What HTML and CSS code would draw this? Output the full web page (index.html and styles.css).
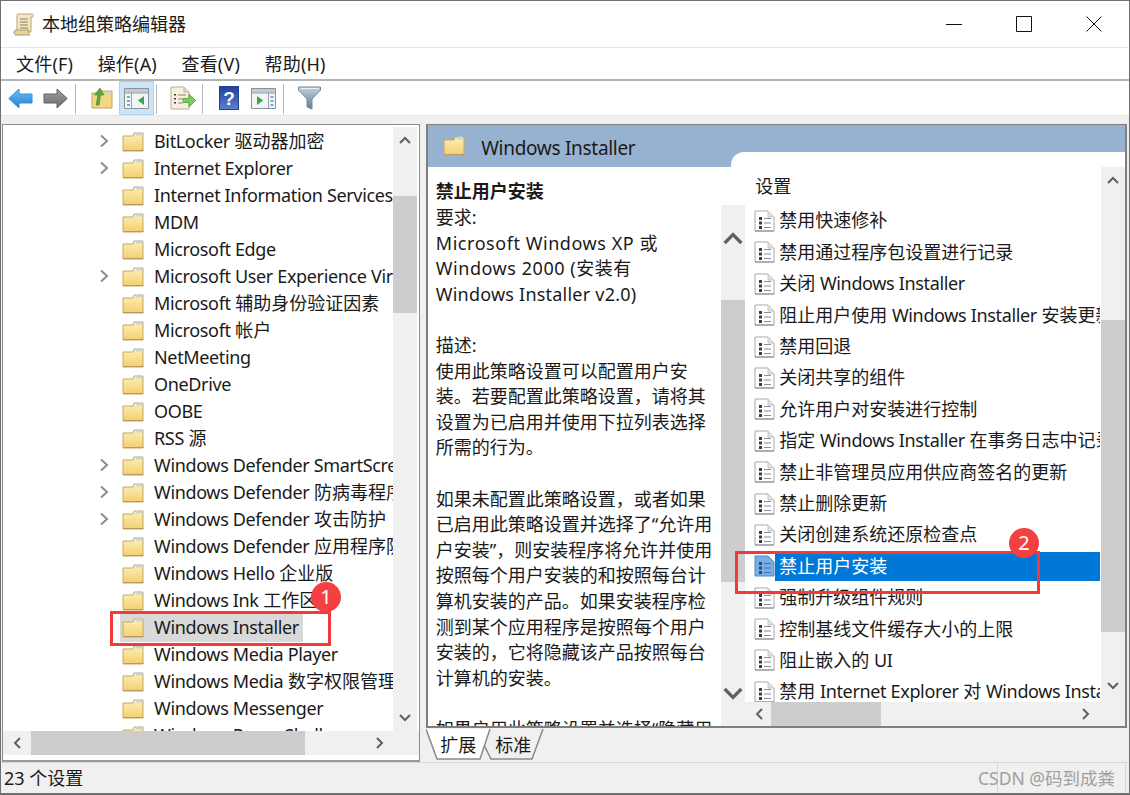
FILE: index.html
```html
<!DOCTYPE html>
<html lang="zh-CN">
<head>
<meta charset="utf-8">
<title>本地组策略编辑器</title>
<link rel="stylesheet" href="styles.css">
</head>
<body>
<svg class="defs" aria-hidden="true">
  <defs>
    <linearGradient id="gFolder" x1="0" y1="0" x2="0" y2="1"><stop offset="0" stop-color="#fdf0b8"/><stop offset="1" stop-color="#f3cf6f"/></linearGradient>
    <linearGradient id="gBack" x1="0" y1="0" x2="0" y2="1"><stop offset="0" stop-color="#6cc0f5"/><stop offset="1" stop-color="#1f7fd6"/></linearGradient>
    <linearGradient id="gFwd" x1="0" y1="0" x2="0" y2="1"><stop offset="0" stop-color="#a2a2a2"/><stop offset="1" stop-color="#6a6a6a"/></linearGradient>
    <linearGradient id="gHelp" x1="0" y1="0" x2="0" y2="1"><stop offset="0" stop-color="#1f3f9c"/><stop offset="1" stop-color="#5a7fd0"/></linearGradient>
    <linearGradient id="gFunnel" x1="0" y1="0" x2="0" y2="1"><stop offset="0" stop-color="#c4d2dc"/><stop offset="1" stop-color="#5f7f92"/></linearGradient>
    <symbol id="folder" viewBox="0 0 22 21">
      <path d="M1 5h10l1-3h9v18H1z" fill="url(#gFolder)" stroke="#c9a765"/>
      <path d="M14 1.500h6v3h-6z" fill="#bcd6e6"/>
      <path d="M1.500 19.500h20" stroke="#b89a5c"/>
    </symbol>
    <symbol id="doc" viewBox="0 0 21 22">
      <path d="M1 1h13l6 6v14H1z" fill="#fff" stroke="#a8a8a8"/>
      <path d="M14 1v6h6" fill="#e4e4e4" stroke="#c4c4c4"/>
      <path d="M1 21h19" stroke="#8a8a8a"/>
      <path d="M5 7h3v3H5zM5 11.500h3v3H5zM5 16h3v3H5z" fill="#3c3c4a"/>
      <path d="M10 8.500h7M10 13h7M10 17.500h7" stroke="#8a8aa0"/>
    </symbol>
    <symbol id="docSel" viewBox="0 0 21 22">
      <path d="M1 1h13l6 6v14H1z" fill="#79aee0" stroke="#4f8cc6"/>
      <path d="M5 7h3v3H5zM5 11.500h3v3H5zM5 16h3v3H5z" fill="#1e4f8c"/>
      <path d="M10 8.500h7M10 13h7M10 17.500h7" stroke="#3f78b4"/>
    </symbol>
    <symbol id="chevR" viewBox="0 0 10 14"><path d="M2 1.500 8 7l-6 5.500" fill="none" stroke="#8c8c8c" stroke-width="2"/></symbol>
    <symbol id="up" viewBox="0 0 12 8"><path d="M1 7 6 2l5 5" fill="none" stroke="#606060" stroke-width="2"/></symbol>
    <symbol id="down" viewBox="0 0 12 8"><path d="M1 1l5 5 5-5" fill="none" stroke="#606060" stroke-width="2"/></symbol>
    <symbol id="left" viewBox="0 0 8 12"><path d="M7 1 2 6l5 5" fill="none" stroke="#606060" stroke-width="2"/></symbol>
    <symbol id="right" viewBox="0 0 8 12"><path d="M1 1l5 5-5 5" fill="none" stroke="#606060" stroke-width="2"/></symbol>
  </defs>
</svg>

<div class="window">
  <header class="titlebar">
    <svg class="app-icon" viewBox="0 0 22 23">
      <path d="M5 1h14c2 0 2 3 0 3h-1v15H4V4C4 2 4 1 5 1z" fill="#f3e8c4" stroke="#b8a478"/>
      <path d="M7 6h8M7 9h8M7 12h8M7 15h8" stroke="#8a8060"/>
      <path d="M1 19c0-2 2-2 3-2h12c-1 1-1 4 1 5H3c-1 0-2-1-2-3z" fill="#e6d49e" stroke="#b09c6c"/>
    </svg>
    <span class="title-text">本地组策略编辑器</span>
    <div class="win-controls">
      <span class="win-btn"><svg viewBox="0 0 16 16"><path d="M0 8.500h16" stroke="#111"/></svg></span>
      <span class="win-btn"><svg viewBox="0 0 16 16"><path d="M.5.500h15v15H.5z" fill="none" stroke="#111"/></svg></span>
      <span class="win-btn"><svg viewBox="0 0 16 16"><path d="M.5.500l15 15M15.500.500l-15 15" stroke="#111"/></svg></span>
    </div>
  </header>

  <nav class="menubar">
    <span>文件(F)</span><span>操作(A)</span><span>查看(V)</span><span>帮助(H)</span>
  </nav>

  <div class="toolbar">
    <span class="tb"><svg class="ic-arrow" viewBox="0 0 25 21"><path d="M.8 10.500 11 1v5h13v9H11v5z" fill="url(#gBack)" stroke="#3a8cd0"/></svg></span>
    <span class="tb"><svg class="ic-arrow" viewBox="0 0 25 21"><path d="M24.200 10.500 14 1v5H1v9h13v5z" fill="url(#gFwd)" stroke="#606060"/></svg></span>
    <i class="sep"></i>
    <span class="tb"><svg class="ic-up" viewBox="0 0 22 22"><path d="M1 6h8l1-2h11v17H1z" fill="#f2d684" stroke="#c4a25c"/><path d="M14 4.500h6v2h-6z" fill="#bcd6e6"/><path d="M5 18 7 8H3.500L9 1l4 7H9.500L8 18z" fill="#58a83c" stroke="#3c8a2c" stroke-width=".6"/></svg></span>
    <span class="tb tb-active"><svg class="ic-pane" viewBox="0 0 25 21"><path d="M.5.500h24v20H.5z" fill="#f2f4f6" stroke="#8a929a"/><path d="M1 1h23v4H1z" fill="#c4cad0"/><path d="M7.500 5v15M1 5h23" stroke="#9aa2aa"/><path d="M3 8h3v2H3zM3 12h3v2H3zM3 16h3v2H3z" fill="#7fa6cc"/><path d="M20 8v9l-6-4.500z" fill="#3aa83a"/></svg></span>
    <i class="sep"></i>
    <span class="tb"><svg class="ic-export" viewBox="0 0 26 24"><path d="M1 1h13l5 5v17H1z" fill="#f6f0dc" stroke="#b8b09a"/><path d="M14 1v5h5" fill="#e4dcc4" stroke="#b8b09a"/><path d="M4 8h2v1.500H4zM4 12h2v1.500H4zM4 16h2v1.500H4z" fill="#3c3c3c"/><path d="M8 9h8M8 13h5M8 17h5" stroke="#8a8a7a"/><path d="M13 12.500h6V8l6.500 6.500-6.500 6.500v-4.500h-6z" fill="#7ccc5c" stroke="#4ea23c" stroke-width=".8"/></svg></span>
    <i class="sep"></i>
    <span class="tb"><svg class="ic-help" viewBox="0 0 20 24"><rect x=".5" y=".5" width="19" height="23" fill="url(#gHelp)" stroke="#25408c"/><text x="10" y="19" class="help-q">?</text></svg></span>
    <span class="tb"><svg class="ic-pane" viewBox="0 0 25 21"><path d="M.5.500h24v20H.5z" fill="#f2f4f6" stroke="#8a929a"/><path d="M1 1h23v4H1z" fill="#c4cad0"/><path d="M17.500 5v15M1 5h23" stroke="#9aa2aa"/><path d="M19.500 8h3v2h-3zM19.500 12h3v2h-3zM19.500 16h3v2h-3z" fill="#7fa6cc"/><path d="M6 8v9l6-4.500z" fill="#3aa83a"/></svg></span>
    <i class="sep"></i>
    <span class="tb"><svg class="ic-filter" viewBox="0 0 23 24"><path d="M.5 1h22v3L14 13v10l-5-2v-8L.5 4z" fill="url(#gFunnel)" stroke="#708a9a"/><path d="M3 2.500h17" stroke="#eef3f6"/></svg></span>
  </div>
  <div class="toolstrip"></div>

  <main class="panes">
    <section class="lpane">
      <div class="lpane-top">
        <ul class="tree">
          <li><svg class="tw"><use href="#chevR"/></svg><svg class="fd"><use href="#folder"/></svg><span><em>BitLocker</em> 驱动器加密</span></li>
          <li><svg class="tw"><use href="#chevR"/></svg><svg class="fd"><use href="#folder"/></svg><span><em>Internet Explorer</em></span></li>
          <li><i class="tw"></i><svg class="fd"><use href="#folder"/></svg><span><em>Internet Information Services</em></span></li>
          <li><i class="tw"></i><svg class="fd"><use href="#folder"/></svg><span><em>MDM</em></span></li>
          <li><i class="tw"></i><svg class="fd"><use href="#folder"/></svg><span><em>Microsoft Edge</em></span></li>
          <li><svg class="tw"><use href="#chevR"/></svg><svg class="fd"><use href="#folder"/></svg><span><em>Microsoft User Experience Virtualization</em></span></li>
          <li><i class="tw"></i><svg class="fd"><use href="#folder"/></svg><span><em>Microsoft</em> 辅助身份验证因素</span></li>
          <li><i class="tw"></i><svg class="fd"><use href="#folder"/></svg><span><em>Microsoft</em> 帐户</span></li>
          <li><i class="tw"></i><svg class="fd"><use href="#folder"/></svg><span><em>NetMeeting</em></span></li>
          <li><i class="tw"></i><svg class="fd"><use href="#folder"/></svg><span><em>OneDrive</em></span></li>
          <li><i class="tw"></i><svg class="fd"><use href="#folder"/></svg><span><em>OOBE</em></span></li>
          <li><i class="tw"></i><svg class="fd"><use href="#folder"/></svg><span><em>RSS</em> 源</span></li>
          <li><svg class="tw"><use href="#chevR"/></svg><svg class="fd"><use href="#folder"/></svg><span><em>Windows Defender SmartScreen</em></span></li>
          <li><svg class="tw"><use href="#chevR"/></svg><svg class="fd"><use href="#folder"/></svg><span><em>Windows Defender</em> 防病毒程序</span></li>
          <li><svg class="tw"><use href="#chevR"/></svg><svg class="fd"><use href="#folder"/></svg><span><em>Windows Defender</em> 攻击防护</span></li>
          <li><i class="tw"></i><svg class="fd"><use href="#folder"/></svg><span><em>Windows Defender</em> 应用程序防护</span></li>
          <li><i class="tw"></i><svg class="fd"><use href="#folder"/></svg><span><em>Windows Hello</em> 企业版</span></li>
          <li><i class="tw"></i><svg class="fd"><use href="#folder"/></svg><span><em>Windows Ink</em> 工作区</span></li>
          <li class="tree-sel"><i class="tw"></i><svg class="fd"><use href="#folder"/></svg><span><em>Windows Installer</em></span></li>
          <li><i class="tw"></i><svg class="fd"><use href="#folder"/></svg><span><em>Windows Media Player</em></span></li>
          <li><i class="tw"></i><svg class="fd"><use href="#folder"/></svg><span><em>Windows Media</em> 数字权限管理</span></li>
          <li><i class="tw"></i><svg class="fd"><use href="#folder"/></svg><span><em>Windows Messenger</em></span></li>
          <li><i class="tw"></i><svg class="fd"><use href="#folder"/></svg><span><em>Windows PowerShell</em></span></li>
        </ul>
        <div class="vs vs-tree">
          <svg class="ar"><use href="#up"/></svg>
          <b class="th-v th-tree"></b>
          <svg class="ar ar-end"><use href="#down"/></svg>
        </div>
      </div>
      <div class="hs hs-tree">
        <svg class="ah"><use href="#left"/></svg>
        <b class="th-h th-h-tree"></b>
        <svg class="ah ah-end"><use href="#right"/></svg>
      </div>
    </section>

    <section class="rcol">
      <div class="rpane">
        <div class="rhead">
          <svg class="fd-head"><use href="#folder"/></svg>
          <span class="rhead-title">Windows Installer</span>
          <i class="rhead-tab"></i>
        </div>
        <div class="rbody">
          <article class="desc">
            <h2>禁止用户安装</h2>
            <p>要求:</p>
            <p class="wide">Microsoft Windows XP 或</p>
            <p class="wide">Windows 2000 (安装有</p>
            <p class="semi">Windows Installer v2.0)</p>
            <p>&nbsp;</p>
            <p>描述:</p>
            <p>使用此策略设置可以配置用户安</p>
            <p>装。若要配置此策略设置，请将其</p>
            <p>设置为已启用并使用下拉列表选择</p>
            <p>所需的行为。</p>
            <p>&nbsp;</p>
            <p>如果未配置此策略设置，或者如果</p>
            <p>已启用此策略设置并选择了“允许用</p>
            <p>户安装”，则安装程序将允许并使用</p>
            <p>按照每个用户安装的和按照每台计</p>
            <p>算机安装的产品。如果安装程序检</p>
            <p>测到某个应用程序是按照每个用户</p>
            <p>安装的，它将隐藏该产品按照每台</p>
            <p>计算机的安装。</p>
            <p>&nbsp;</p>
            <p>如果启用此策略设置并选择“隐藏用</p>
          </article>
          <div class="settings">
            <div class="settings-top">
              <div class="settings-main">
                <div class="settings-head">设置</div>
                <div class="settings-body">
                  <div class="vs vs-desc">
                    <svg class="ar-big"><use href="#up"/></svg>
                    <b class="th-v th-desc"></b>
                    <svg class="ar-big ar-end"><use href="#down"/></svg>
                  </div>
                  <ul class="list">
                    <li><svg class="dc"><use href="#doc"/></svg><span>禁用快速修补</span></li>
                    <li><svg class="dc"><use href="#doc"/></svg><span>禁用通过程序包设置进行记录</span></li>
                    <li><svg class="dc"><use href="#doc"/></svg><span>关闭 <em>Windows Installer</em></span></li>
                    <li><svg class="dc"><use href="#doc"/></svg><span>阻止用户使用 <em>Windows Installer</em> 安装更新和升级</span></li>
                    <li><svg class="dc"><use href="#doc"/></svg><span>禁用回退</span></li>
                    <li><svg class="dc"><use href="#doc"/></svg><span>关闭共享的组件</span></li>
                    <li><svg class="dc"><use href="#doc"/></svg><span>允许用户对安装进行控制</span></li>
                    <li><svg class="dc"><use href="#doc"/></svg><span>指定 <em>Windows Installer</em> 在事务日志中记录</span></li>
                    <li><svg class="dc"><use href="#doc"/></svg><span>禁止非管理员应用供应商签名的更新</span></li>
                    <li><svg class="dc"><use href="#doc"/></svg><span>禁止删除更新</span></li>
                    <li><svg class="dc"><use href="#doc"/></svg><span>关闭创建系统还原检查点</span></li>
                    <li class="list-sel"><svg class="dc"><use href="#docSel"/></svg><span>禁止用户安装</span></li>
                    <li><svg class="dc"><use href="#doc"/></svg><span>强制升级组件规则</span></li>
                    <li><svg class="dc"><use href="#doc"/></svg><span>控制基线文件缓存大小的上限</span></li>
                    <li><svg class="dc"><use href="#doc"/></svg><span>阻止嵌入的 <em>UI</em></span></li>
                    <li><svg class="dc"><use href="#doc"/></svg><span>禁用 <em>Internet Explorer</em> 对 <em>Windows Installer</em> 脚本的安全提示</span></li>
                  </ul>
                </div>
              </div>
              <div class="vs vs-list">
                <svg class="ar"><use href="#up"/></svg>
                <b class="th-v th-list"></b>
                <svg class="ar ar-end"><use href="#down"/></svg>
              </div>
            </div>
            <div class="hs hs-list">
              <svg class="ah"><use href="#left"/></svg>
              <b class="th-h th-h-list"></b>
              <svg class="ah ah-end"><use href="#right"/></svg>
            </div>
          </div>
        </div>
      </div>
      <div class="tabs">
        <svg class="tabs-bg" viewBox="0 0 120 33">
          <path d="M58 17 65 31h41l11-30" fill="#f0f0f0" stroke="#8a8a8a" stroke-width="1.500"/>
          <path d="M0 1 11 31h43L64 1z" fill="#fff"/>
          <path d="M0 1 11 31h43L64 1" fill="none" stroke="#8a8a8a" stroke-width="1.500"/>
        </svg>
        <span class="tab">扩展</span>
        <span class="tab">标准</span>
      </div>
    </section>
  </main>

  <footer class="status">
    <span class="status-text">23 个设置</span>
    <i class="status-sep"></i>
    <i class="status-end"></i>
  </footer>

  <div class="mark mark-1"></div>
  <div class="badge badge-1">1</div>
  <div class="mark mark-2"></div>
  <div class="badge badge-2">2</div>
  <div class="watermark">CSDN @码到成粪</div>
</div>
</body>
</html>
```

FILE: styles.css
```css
* { box-sizing: border-box; }
html, body { margin: 0; padding: 0; }
body {
  width: 1130px;
  height: 795px;
  overflow: hidden;
  font-family: "Noto Sans", "Noto Sans CJK SC", sans-serif;
  font-size: 18px;
  color: #1a1a1a;
  background: #f0f0f0;
}
ul { list-style: none; margin: 0; padding: 0; }
em { font-style: normal; letter-spacing: -.35px; }
.defs { position: absolute; width: 0; height: 0; }

.window {
  position: relative;
  width: 1130px;
  height: 795px;
  display: flex;
  flex-direction: column;
  border: 1px solid #707070;
  border-bottom-width: 2px;
}

/* title + menu + tools */
.titlebar {
  flex: 0 0 46px;
  display: flex;
  align-items: center;
  padding-left: 12px;
  background: #fff;
  border-bottom: 1px solid #e5e5e5;
}
.app-icon { width: 22px; height: 23px; margin-right: 7px; }
.title-text { line-height: 46px; }
.win-controls { margin-left: auto; display: flex; }
.win-btn { width: 70px; height: 46px; display: flex; align-items: center; justify-content: center; }
.win-btn svg { width: 16px; height: 16px; }

.menubar {
  flex: 0 0 33px;
  display: flex;
  gap: 24.500px;
  padding: 0 0 2px 15px;
  align-items: center;
  letter-spacing: .2px;
  background: #fff;
  border-bottom: 2px solid #b4b4b4;
}

.toolbar {
  flex: 0 0 34px;
  display: flex;
  align-items: stretch;
  padding-left: 2px;
  background: #fff;
}
.tb { width: 35px; display: flex; align-items: center; justify-content: center; }
.tb-active { background: #cce4f7; border: 1px solid #a9d2f2; }
.sep { width: 1px; margin: 3px 8px 1px 2px; background: #b8b8b8; }
.ic-arrow { width: 25px; height: 21px; }
.ic-up { width: 22px; height: 22px; }
.ic-pane { width: 25px; height: 21px; }
.ic-export { width: 26px; height: 24px; }
.ic-help { width: 20px; height: 24px; }
.ic-filter { width: 23px; height: 24px; }
.help-q { font-family: "Liberation Sans", sans-serif; font-weight: 700; font-size: 19px; fill: #fff; text-anchor: middle; }

.toolstrip { flex: 0 0 9px; background: #f0f0f0; border-top: 1px solid #e4e4e4; }

/* panes */
.panes { flex: 0 0 637px; display: flex; background: #f0f0f0; }

.lpane {
  width: 419px;
  margin-left: 1px;
  display: flex;
  flex-direction: column;
  background: #fff;
  border: 1px solid #8c8c8c;
  border-bottom: 2px solid #9a9a9a;
  border-left-width: 1px;
}
.lpane-top { flex: 0 0 606px; display: flex; min-height: 0; }
.tree { width: 390px; padding-top: 2.5px; overflow: hidden; }
.tree li { height: 27px; display: flex; align-items: center; white-space: nowrap; padding-left: 96px; }
.tw { flex: 0 0 10px; width: 10px; height: 14px; margin-right: 13px; }
.fd { flex: 0 0 22px; width: 22px; height: 21px; }
.tree li > span { padding: 0 4px 0 10px; line-height: 27px; }
.tree-sel { position: relative; }
.tree-sel::before { content: ""; position: absolute; left: 117px; width: 183px; top: -1px; bottom: -1px; background: #d9d9d9; z-index: 0; }
.tree-sel > * { position: relative; z-index: 1; }

.vs { flex: none; width: 24px; background: #f0f0f0; display: flex; flex-direction: column; align-items: center; }
.vs-tree { height: 604px; margin-top: 2px; padding: 9px 0 9px; }
.ar { width: 12px; height: 8px; flex: none; }
.ar-big { width: 20px; height: 14px; flex: none; }
.ar-end { margin-top: auto; }
.th-v { display: block; width: 100%; background: #cdcdcd; flex: none; }
.th-tree { height: 117px; margin-top: 52px; }

.hs { display: flex; align-items: center; background: #f0f0f0; height: 24px; padding-left: 10px; }
.ah { width: 8px; height: 12px; flex: none; }
.ah-end { margin-left: auto; }
.th-h { display: block; height: 100%; background: #cdcdcd; flex: none; }
.hs-tree { padding-right: 35px; }
.th-h-tree { width: 274px; margin-left: 10px; }

.rcol { width: 704px; margin-left: 6px; display: flex; flex-direction: column; }
.rpane {
  flex: 0 0 604px;
  width: 701px;
  display: flex;
  flex-direction: column;
  background: #fff;
  border: 2px solid #7f7f7f;
  border-top-width: 1px;
  overflow: hidden;
}
.rhead {
  position: relative;
  flex: 0 0 42px;
  display: flex;
  align-items: flex-start;
  background: #97b2d0;
  padding: 10px 0 0 15px;
}
.fd-head { width: 22px; height: 21px; }
.rhead-title { margin: 1px 0 0 16px; font-size: 19px; line-height: 25px; letter-spacing: -.3px; }
.rhead-tab { position: absolute; left: 303px; right: 0; bottom: 0; height: 15px; background: #fff; border-top-left-radius: 13px; }

.rbody { flex: 1; display: flex; min-height: 0; }
.desc { flex: 0 0 293px; padding: 9.500px 0 0 7.500px; overflow: hidden; white-space: nowrap; }
.desc h2 { margin: 0; font-size: 18px; font-weight: 700; line-height: 28.500px; }
.desc p { margin: 0; line-height: 25.600px; }
.desc .wide { letter-spacing: .55px; }
.desc .semi { letter-spacing: .22px; }

.settings { flex: 1; display: flex; flex-direction: column; min-width: 0; }
.settings-top { flex: 1; display: flex; min-height: 0; }
.settings-main { flex: 1; display: flex; flex-direction: column; min-width: 0; }
.settings-head { flex: 0 0 38.300px; min-height: 0; padding-left: 34px; line-height: 39px; }
.settings-body { flex: 1; display: flex; min-height: 0; }
.vs-desc { height: 521px; padding: 26px 0 25px; }
.th-desc { height: 282px; margin-top: 55px; }
.list { flex: 1; min-width: 0; overflow: hidden; }
.list li { height: 31.400px; display: flex; align-items: center; white-space: nowrap; padding-left: 9px; }
.dc { flex: 0 0 21px; width: 21px; height: 22px; }
.list li > span { flex: 1; padding-left: 4px; line-height: 29px; overflow: hidden; }
.list-sel > span { background: #0078d7; color: #fff; }

.vs-list { width: 24px; padding: 9px 0 12px; margin-left: 1px; }
.th-list { height: 312px; margin-top: 136px; }

.hs-list { margin-left: 24px; padding-right: 35px; }
.th-h-list { width: 110px; margin-left: 8px; }

.tabs { position: relative; flex: 1; display: flex; padding-left: 14px; gap: 19px; }
.tabs-bg { position: absolute; left: 0; top: 0; width: 120px; height: 33px; }
.tab { position: relative; line-height: 34px; }

.status {
  flex: 1;
  display: flex;
  align-items: center;
  background: #f0f0f0;
  border-top: 1px solid #d8d8d8;
  padding-left: 3px;
}
.status-text { line-height: 30px; }
.status-sep { width: 1px; align-self: stretch; background: #d8d8d8; margin-left: 914px; }
.status-end { width: 1px; align-self: stretch; background: #d8d8d8; margin-left: 127px; }

/* annotations */
.mark { position: absolute; border: 3px solid #f33a3a; }
.mark-1 { left: 109px; top: 610px; width: 221px; height: 35px; }
.mark-2 { left: 734px; top: 550px; width: 305px; height: 43px; }
.badge {
  position: absolute;
  width: 30px;
  height: 30px;
  border-radius: 50%;
  background: #f44040;
  color: #fff;
  font-size: 20px;
  line-height: 30px;
  text-align: center;
}
.badge-1 { left: 310px; top: 581px; }
.badge-2 { left: 1008px; top: 527px; }
.watermark {
  position: absolute;
  left: 977px;
  top: 766px;
  font-size: 17.500px;
  line-height: 22px;
  color: #a0a0a0;
  white-space: nowrap;
}
```
